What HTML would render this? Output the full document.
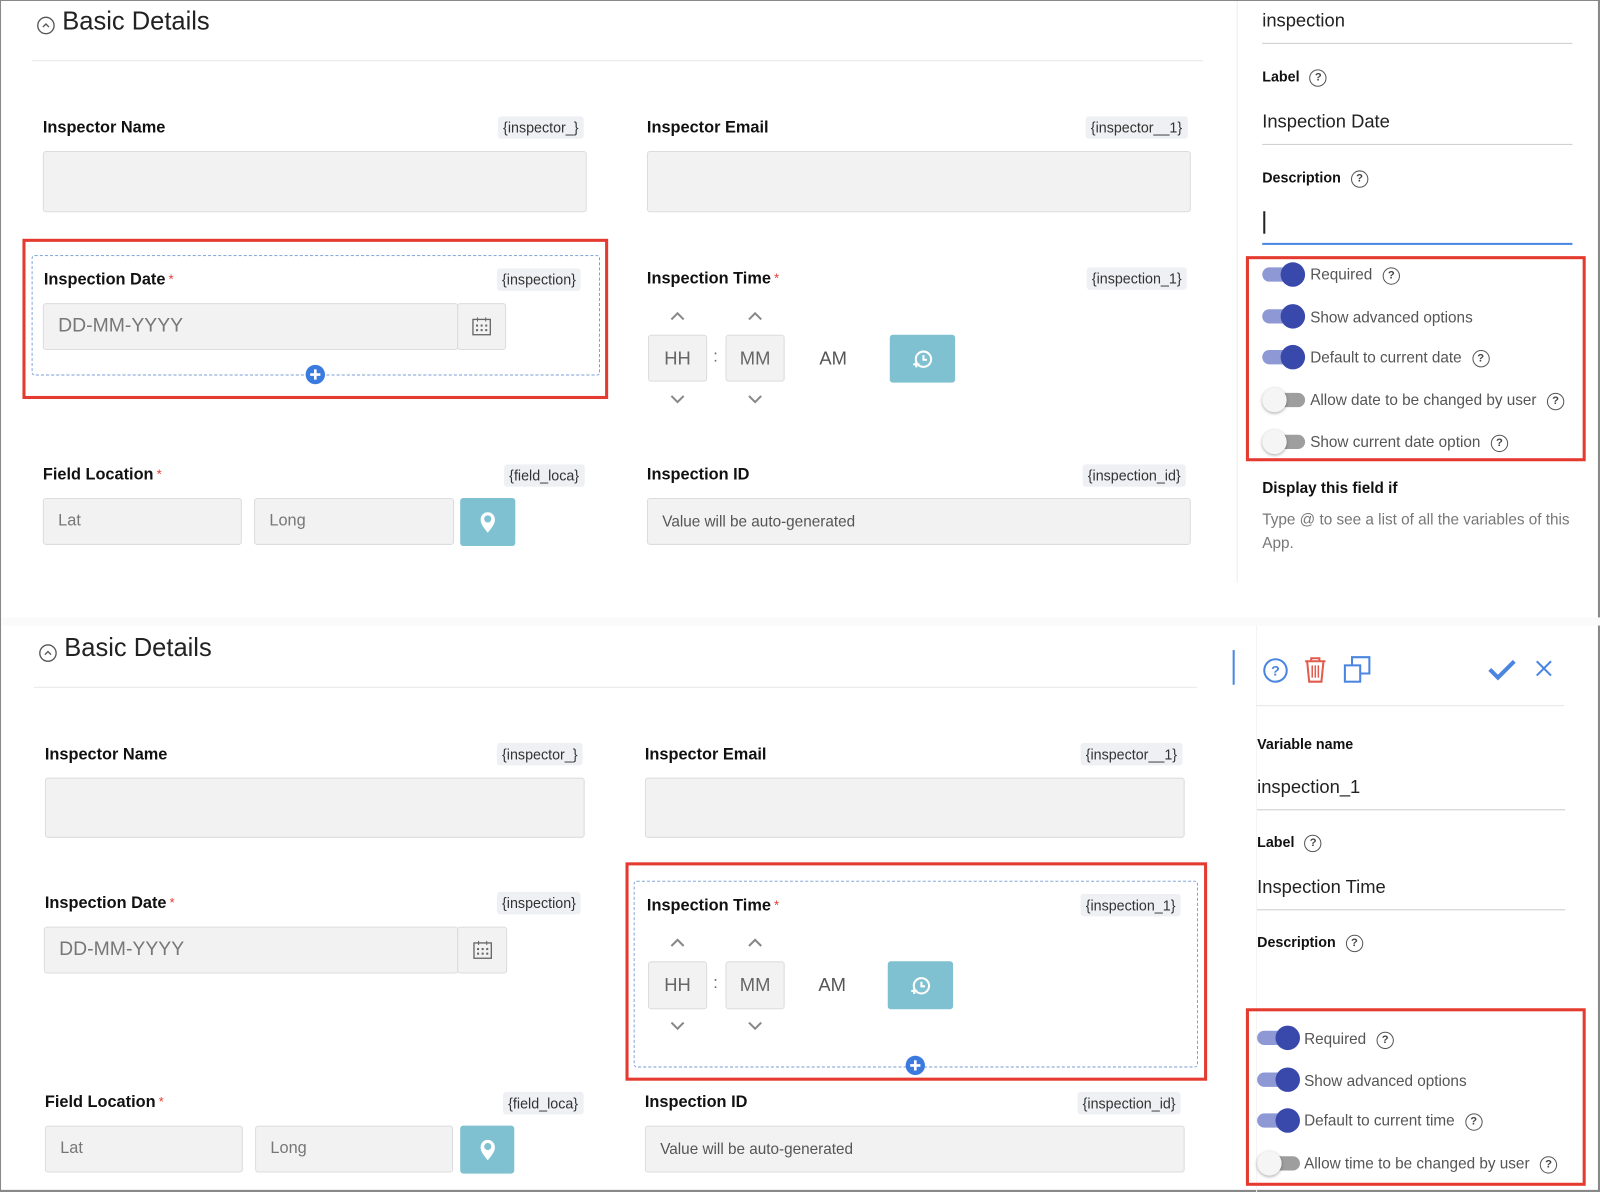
<!DOCTYPE html>
<html><head><meta charset="utf-8"><style>
*{box-sizing:border-box;margin:0;padding:0}
html,body{width:1600px;height:1192px;overflow:hidden;background:#fff}
#w{position:absolute;left:0;top:0;width:1568px;height:1168px;transform:scale(1.0204,1.0205);transform-origin:0 0;font-family:"Liberation Sans",sans-serif;color:#222;border:1px solid #888;border-right:2px solid #888;border-bottom:2px solid #888}
.a{position:absolute}
.h{font-size:25px;color:#222}
.lb{font-size:16px;font-weight:bold;color:#111}
.st{color:#e53a2f;font-weight:normal;font-size:13px;vertical-align:top;margin-left:3px}
.tg{font-size:14px;color:#333;background:#eef0f3;border-radius:3px;padding:2px 5px;height:22px;line-height:18px}
.in{background:#f2f2f2;border:1px solid #dcdcdc;border-radius:3px}
.ph{font-size:16px;color:#777;padding-left:14px;display:flex;align-items:center}
.btn{background:#7fc1d1;border-radius:3px;display:flex;align-items:center;justify-content:center}
.red{border:3px solid #e53a2f}
.dash{border:1px dashed #7a9fd6;border-radius:3px}
.hr{height:1px;background:#e8e8e8}
.rl{font-size:14px;font-weight:bold;color:#111}
.rv{font-size:18px;color:#222}
.q{display:inline-block;width:17px;height:17px;border:1.5px solid #555;border-radius:50%;font-size:11px;text-align:center;line-height:14px;color:#444;font-weight:bold;vertical-align:middle}
.tl{font-size:15px;color:#555}
.ton{width:42px;height:18px}
.ton:before{content:"";position:absolute;left:0;top:2px;width:36px;height:14px;border-radius:7px;background:#8e98d4}
.ton:after{content:"";position:absolute;left:18px;top:-3px;width:24px;height:24px;border-radius:50%;background:#3949ab}
.tof:before{content:"";position:absolute;left:6px;top:2px;width:36px;height:14px;border-radius:7px;background:#9e9e9e}
.tof:after{content:"";position:absolute;left:0;top:-3px;width:24px;height:24px;border-radius:50%;background:#f5f5f5;box-shadow:0 1px 3px rgba(0,0,0,.35)}
.tb{font-size:18px;color:#666;display:flex;align-items:center;justify-content:center}
</style></head><body><div id="w">

<svg class="a" style="left:35px;top:15px" width="18" height="18"><circle cx="9" cy="9" r="8" fill="none" stroke="#555" stroke-width="1.3"/><path d="M6 10.5l3-3 3 3" fill="none" stroke="#555" stroke-width="1.3"/></svg>
<div class="a h" style="left:60px;top:6px">Basic Details</div>
<div class="a hr" style="left:30px;top:58px;width:1148px"></div>

<div class="a lb" style="left:41px;top:116px">Inspector Name</div>
<div class="a tg" style="left:487px;top:113px">{inspector_}</div>
<div class="a in" style="left:41px;top:147px;width:533px;height:60px"></div>
<div class="a lb" style="left:633px;top:116px">Inspector Email</div>
<div class="a tg" style="left:1063px;top:113px">{inspector__1}</div>
<div class="a in" style="left:633px;top:147px;width:533px;height:60px"></div>

<div class="a red" style="left:21px;top:233px;width:574px;height:157px"></div>
<div class="a dash" style="left:30px;top:249px;width:557px;height:118px"></div>
<div class="a lb" style="left:42px;top:265px">Inspection Date<span class="st">*</span></div>
<div class="a tg" style="left:486px;top:262px">{inspection}</div>
<div class="a in ph" style="left:41px;top:296px;width:407px;height:46px;font-size:19px">DD-MM-YYYY</div>
<div class="a in" style="left:447px;top:296px;width:48px;height:46px"></div>
<svg class="a" style="left:461px;top:309px" width="20" height="20"><rect x="1.5" y="3" width="17" height="15" fill="none" stroke="#666" stroke-width="1.3"/><path d="M6 1v4M14 1v4" stroke="#666"/><g fill="#666"><rect x="4.5" y="8" width="2" height="2"/><rect x="9" y="8" width="2" height="2"/><rect x="13.5" y="8" width="2" height="2"/><rect x="4.5" y="12.5" width="2" height="2"/><rect x="9" y="12.5" width="2" height="2"/><rect x="13.5" y="12.5" width="2" height="2"/></g></svg>
<svg class="a" style="left:298px;top:356px" width="20" height="20"><circle cx="10" cy="10" r="9.5" fill="#3b7be0"/><path d="M10 5v10M5 10h10" stroke="#fff" stroke-width="2.6"/></svg>

<div class="a lb" style="left:633px;top:264px">Inspection Time<span class="st">*</span></div>
<div class="a tg" style="left:1064px;top:261px">{inspection_1}</div>
<svg class="a" style="left:655px;top:304px" width="16" height="10"><path d="M2 8l6-6 6 6" fill="none" stroke="#888" stroke-width="2"/></svg>
<svg class="a" style="left:731px;top:304px" width="16" height="10"><path d="M2 8l6-6 6 6" fill="none" stroke="#888" stroke-width="2"/></svg>
<div class="a in tb" style="left:634px;top:327px;width:58px;height:46px">HH</div>
<div class="a" style="left:698px;top:340px;color:#666;font-size:16px">:</div>
<div class="a in tb" style="left:710px;top:327px;width:58px;height:46px">MM</div>
<div class="a" style="left:802px;top:340px;font-size:18px;color:#555">AM</div>
<div class="a btn" style="left:871px;top:327px;width:64px;height:47px"><svg width="24" height="24"><circle cx="13" cy="12" r="7.5" fill="none" stroke="#fff" stroke-width="2"/><path d="M13 8v4.5h3.5" fill="none" stroke="#fff" stroke-width="2"/><path d="M3 17h6M6 14v6" stroke="#fff" stroke-width="2"/></svg></div>
<svg class="a" style="left:655px;top:385px" width="16" height="10"><path d="M2 2l6 6 6-6" fill="none" stroke="#888" stroke-width="2"/></svg>
<svg class="a" style="left:731px;top:385px" width="16" height="10"><path d="M2 2l6 6 6-6" fill="none" stroke="#888" stroke-width="2"/></svg>

<div class="a lb" style="left:41px;top:456px">Field Location<span class="st">*</span></div>
<div class="a tg" style="left:493px;top:454px">{field_loca}</div>
<div class="a in ph" style="left:41px;top:487px;width:195px;height:46px">Lat</div>
<div class="a in ph" style="left:248px;top:487px;width:196px;height:46px">Long</div>
<div class="a btn" style="left:450px;top:487px;width:54px;height:47px"><svg width="18" height="24"><path d="M9 22C3 15 2 12 2 9a7 7 0 0114 0c0 3-1 6-7 13z" fill="#fff"/><circle cx="9" cy="8.5" r="3.5" fill="#7fc1d1"/></svg></div>
<div class="a lb" style="left:633px;top:456px">Inspection ID</div>
<div class="a tg" style="left:1060px;top:454px">{inspection_id}</div>
<div class="a in ph" style="left:633px;top:487px;width:533px;height:46px;font-size:15px;color:#555">Value will be auto-generated</div>

<div class="a" style="left:1211px;top:0;width:1px;height:570px;background:#eee"></div>
<div class="a rv" style="left:1236px;top:9px">inspection</div>
<div class="a hr" style="left:1236px;top:41px;width:304px;background:#ccc"></div>
<div class="a rl" style="left:1236px;top:66px">Label <span class="q" style="margin-left:6px">?</span></div>
<div class="a rv" style="left:1236px;top:108px">Inspection Date</div>
<div class="a hr" style="left:1236px;top:140px;width:304px;background:#ccc"></div>
<div class="a rl" style="left:1236px;top:165px">Description <span class="q" style="margin-left:6px">?</span></div>
<div class="a" style="left:1237px;top:206px;width:1.5px;height:22px;background:#222"></div>
<div class="a" style="left:1236px;top:237px;width:304px;height:2px;background:#4a86e0"></div>
<div class="a red" style="left:1220px;top:250px;width:333px;height:201px"></div>
<div class="a ton" style="left:1236px;top:259px"></div><div class="a tl" style="left:1283px;top:260px">Required <span class="q" style="margin-left:6px">?</span></div>
<div class="a ton" style="left:1236px;top:300px"></div><div class="a tl" style="left:1283px;top:302px">Show advanced options</div>
<div class="a ton" style="left:1236px;top:340px"></div><div class="a tl" style="left:1283px;top:341px">Default to current date <span class="q" style="margin-left:6px">?</span></div>
<div class="a ton tof" style="left:1236px;top:382px"></div><div class="a tl" style="left:1283px;top:383px">Allow date to be changed by user <span class="q" style="margin-left:6px">?</span></div>
<div class="a ton tof" style="left:1236px;top:423px"></div><div class="a tl" style="left:1283px;top:424px">Show current date option <span class="q" style="margin-left:6px">?</span></div>
<div class="a rl" style="left:1236px;top:469px;font-size:15px">Display this field if</div>
<div class="a" style="left:1236px;top:497px;width:305px;font-size:15px;color:#777;line-height:23px">Type @ to see a list of all the variables of this App.</div>

<div class="a" style="left:0;top:604px;width:1568px;height:8px;background:#fafafa"></div>

<svg class="a" style="left:37px;top:630px" width="18" height="18"><circle cx="9" cy="9" r="8" fill="none" stroke="#555" stroke-width="1.3"/><path d="M6 10.5l3-3 3 3" fill="none" stroke="#555" stroke-width="1.3"/></svg>
<div class="a h" style="left:62px;top:620px">Basic Details</div>
<div class="a hr" style="left:32px;top:672px;width:1140px"></div>

<div class="a lb" style="left:43px;top:730px">Inspector Name</div>
<div class="a tg" style="left:486px;top:727px">{inspector_}</div>
<div class="a in" style="left:43px;top:761px;width:529px;height:59px"></div>
<div class="a lb" style="left:631px;top:730px">Inspector Email</div>
<div class="a tg" style="left:1058px;top:727px">{inspector__1}</div>
<div class="a in" style="left:631px;top:761px;width:529px;height:59px"></div>

<div class="a lb" style="left:43px;top:876px">Inspection Date<span class="st">*</span></div>
<div class="a tg" style="left:486px;top:873px">{inspection}</div>
<div class="a in ph" style="left:42px;top:907px;width:406px;height:46px;font-size:19px">DD-MM-YYYY</div>
<div class="a in" style="left:447px;top:907px;width:49px;height:46px"></div>
<svg class="a" style="left:462px;top:920px" width="20" height="20"><rect x="1.5" y="3" width="17" height="15" fill="none" stroke="#666" stroke-width="1.3"/><path d="M6 1v4M14 1v4" stroke="#666"/><g fill="#666"><rect x="4.5" y="8" width="2" height="2"/><rect x="9" y="8" width="2" height="2"/><rect x="13.5" y="8" width="2" height="2"/><rect x="4.5" y="12.5" width="2" height="2"/><rect x="9" y="12.5" width="2" height="2"/><rect x="13.5" y="12.5" width="2" height="2"/></g></svg>

<div class="a red" style="left:612px;top:844px;width:570px;height:214px"></div>
<div class="a dash" style="left:620px;top:862px;width:553px;height:183px"></div>
<div class="a lb" style="left:633px;top:878px">Inspection Time<span class="st">*</span></div>
<div class="a tg" style="left:1058px;top:875px">{inspection_1}</div>
<svg class="a" style="left:655px;top:918px" width="16" height="10"><path d="M2 8l6-6 6 6" fill="none" stroke="#888" stroke-width="2"/></svg>
<svg class="a" style="left:731px;top:918px" width="16" height="10"><path d="M2 8l6-6 6 6" fill="none" stroke="#888" stroke-width="2"/></svg>
<div class="a in tb" style="left:634px;top:941px;width:58px;height:47px">HH</div>
<div class="a" style="left:698px;top:954px;color:#666;font-size:16px">:</div>
<div class="a in tb" style="left:710px;top:941px;width:58px;height:47px">MM</div>
<div class="a" style="left:801px;top:954px;font-size:18px;color:#555">AM</div>
<div class="a btn" style="left:869px;top:941px;width:64px;height:47px"><svg width="24" height="24"><circle cx="13" cy="12" r="7.5" fill="none" stroke="#fff" stroke-width="2"/><path d="M13 8v4.5h3.5" fill="none" stroke="#fff" stroke-width="2"/><path d="M3 17h6M6 14v6" stroke="#fff" stroke-width="2"/></svg></div>
<svg class="a" style="left:655px;top:999px" width="16" height="10"><path d="M2 2l6 6 6-6" fill="none" stroke="#888" stroke-width="2"/></svg>
<svg class="a" style="left:731px;top:999px" width="16" height="10"><path d="M2 2l6 6 6-6" fill="none" stroke="#888" stroke-width="2"/></svg>
<svg class="a" style="left:886px;top:1033px" width="20" height="20"><circle cx="10" cy="10" r="9.5" fill="#3b7be0"/><path d="M10 5v10M5 10h10" stroke="#fff" stroke-width="2.6"/></svg>

<div class="a lb" style="left:43px;top:1071px">Field Location<span class="st">*</span></div>
<div class="a tg" style="left:492px;top:1069px">{field_loca}</div>
<div class="a in ph" style="left:43px;top:1102px;width:194px;height:46px">Lat</div>
<div class="a in ph" style="left:249px;top:1102px;width:194px;height:46px">Long</div>
<div class="a btn" style="left:450px;top:1102px;width:53px;height:47px"><svg width="18" height="24"><path d="M9 22C3 15 2 12 2 9a7 7 0 0114 0c0 3-1 6-7 13z" fill="#fff"/><circle cx="9" cy="8.5" r="3.5" fill="#7fc1d1"/></svg></div>
<div class="a lb" style="left:631px;top:1071px">Inspection ID</div>
<div class="a tg" style="left:1055px;top:1069px">{inspection_id}</div>
<div class="a in ph" style="left:631px;top:1102px;width:529px;height:46px;font-size:15px;color:#555">Value will be auto-generated</div>

<div class="a" style="left:1230px;top:612px;width:1px;height:556px;background:#f2f2f2"></div>
<div class="a" style="left:1207px;top:636px;width:2px;height:34px;background:#4a86e0"></div>
<svg class="a" style="left:1236px;top:643px" width="26" height="26"><circle cx="13" cy="13" r="11" fill="none" stroke="#4a86e0" stroke-width="2"/><text x="13" y="18" font-size="14" font-family="Liberation Sans" font-weight="bold" fill="#4a86e0" text-anchor="middle">?</text></svg>
<svg class="a" style="left:1275px;top:641px" width="26" height="28"><path d="M3 6h20M9 6V3h8v3M5 6l2 20h12l2-20" fill="none" stroke="#e25b4f" stroke-width="2"/><path d="M10 10v12M13 10v12M16 10v12" stroke="#e25b4f" stroke-width="1.5"/></svg>
<svg class="a" style="left:1315px;top:640px" width="30" height="30"><rect x="2" y="11" width="15" height="16" fill="none" stroke="#4a86e0" stroke-width="2"/><path d="M9 11V3h17v16h-9" fill="none" stroke="#4a86e0" stroke-width="2"/></svg>
<svg class="a" style="left:1456px;top:643px" width="30" height="24"><path d="M3 12l8 8L27 4" fill="none" stroke="#4a86e0" stroke-width="4"/></svg>
<svg class="a" style="left:1502px;top:644px" width="20" height="20"><path d="M3 3l14 14M17 3L3 17" stroke="#4a86e0" stroke-width="2"/></svg>
<div class="a hr" style="left:1230px;top:690px;width:302px;background:#e6e6e6"></div>
<div class="a rl" style="left:1231px;top:720px">Variable name</div>
<div class="a rv" style="left:1231px;top:760px">inspection_1</div>
<div class="a hr" style="left:1231px;top:792px;width:302px;background:#ccc"></div>
<div class="a rl" style="left:1231px;top:816px">Label <span class="q" style="margin-left:6px">?</span></div>
<div class="a rv" style="left:1231px;top:858px">Inspection Time</div>
<div class="a hr" style="left:1231px;top:890px;width:302px;background:#ccc"></div>
<div class="a rl" style="left:1231px;top:914px">Description <span class="q" style="margin-left:6px">?</span></div>
<div class="a red" style="left:1220px;top:987px;width:333px;height:174px"></div>
<div class="a ton" style="left:1231px;top:1007px"></div><div class="a tl" style="left:1277px;top:1009px">Required <span class="q" style="margin-left:6px">?</span></div>
<div class="a ton" style="left:1231px;top:1048px"></div><div class="a tl" style="left:1277px;top:1050px">Show advanced options</div>
<div class="a ton" style="left:1231px;top:1088px"></div><div class="a tl" style="left:1277px;top:1089px">Default to current time <span class="q" style="margin-left:6px">?</span></div>
<div class="a ton tof" style="left:1231px;top:1130px"></div><div class="a tl" style="left:1277px;top:1131px">Allow time to be changed by user <span class="q" style="margin-left:6px">?</span></div>
</div></body></html>
